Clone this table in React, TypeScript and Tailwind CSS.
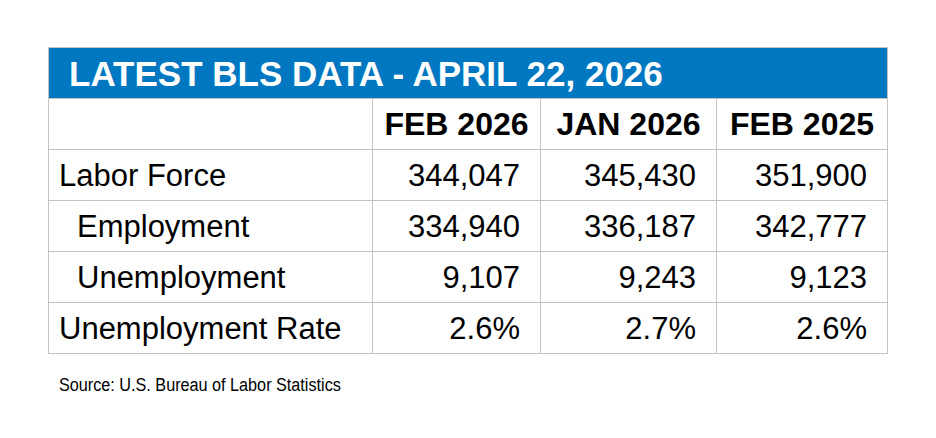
const ROWS = [
  { label: "Labor Force", indent: false, vals: ["344,047", "345,430", "351,900"] },
  { label: "Employment", indent: true, vals: ["334,940", "336,187", "342,777"] },
  { label: "Unemployment", indent: true, vals: ["9,107", "9,243", "9,123"] },
  { label: "Unemployment Rate", indent: false, vals: ["2.6%", "2.7%", "2.6%"] },
];

const HEADS = ["FEB 2026", "JAN 2026", "FEB 2025"];

export default function App() {
  return (
    <div className="w-[936px] h-[438px] bg-white pl-[48px] pt-[47px] font-['Liberation_Sans',Arial,sans-serif] text-black">
      <table className="w-[839px] table-fixed border-collapse">
        <colgroup>
          <col className="w-[324px]" />
          <col className="w-[168px]" />
          <col className="w-[176px]" />
          <col className="w-[171px]" />
        </colgroup>
        <thead>
          <tr className="h-[51px]">
            <th colSpan={4} className="border border-[#c3c3c3] bg-[#0077c1] pl-[20px] pt-[1px] text-left text-[35px] font-bold leading-none text-white">
              LATEST BLS DATA - APRIL 22, 2026
            </th>
          </tr>
          <tr className="h-[51px]">
            <th className="border border-[#c3c3c3]" />
            {HEADS.map(h => (
              <th key={h} className="border border-[#c3c3c3] text-center text-[32px] font-bold leading-none">{h}</th>
            ))}
          </tr>
        </thead>
        <tbody>
          {ROWS.map(r => (
            <tr key={r.label} className="h-[51px]">
              <td className={`border border-[#c3c3c3] text-[31px] leading-none ${r.indent ? "pl-[28px]" : "pl-[10px]"}`}>{r.label}</td>
              {r.vals.map((v, i) => (
                <td key={i} className="border border-[#c3c3c3] pr-[20px] text-right text-[31px] leading-none">{v}</td>
              ))}
            </tr>
          ))}
        </tbody>
      </table>
      <p className="mt-[21px] ml-[11px] origin-left scale-x-90 text-[18px] leading-[21px] whitespace-nowrap">
        Source: U.S. Bureau of Labor Statistics
      </p>
    </div>
  );
}
